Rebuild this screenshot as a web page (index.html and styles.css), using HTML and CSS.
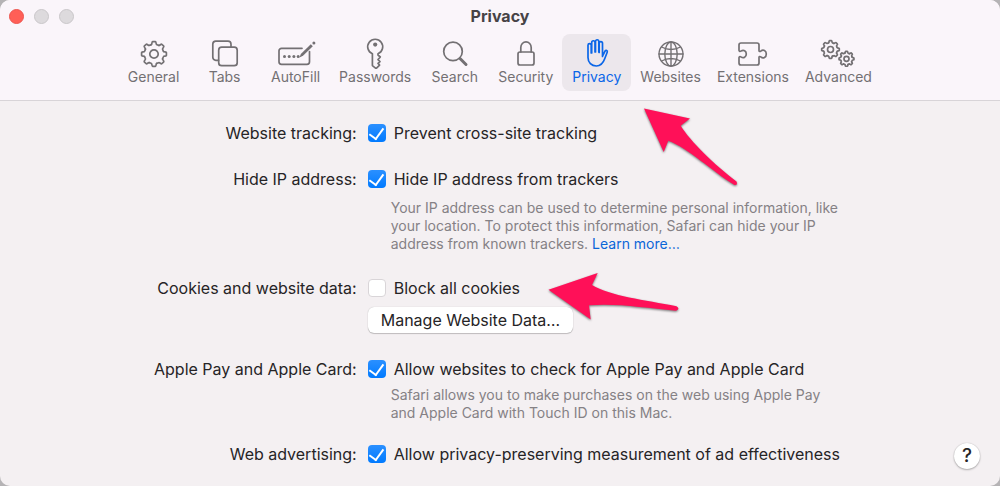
FILE: index.html
```html
<!DOCTYPE html>
<html lang="en">
<head>
<meta charset="utf-8">
<meta name="viewport" content="width=device-width, initial-scale=1">
<title>Privacy</title>
<link rel="stylesheet" href="styles.css">
</head>
<body>
<svg class="defs" aria-hidden="true">
  <defs>
    <path id="tooth" vector-effect="non-scaling-stroke" d="M-2.6-9.5C-1.8-9.9-2.3-12.4-1.4-12.4H1.4C2.3-12.4 1.8-9.9 2.6-9.5Q3.5-8.9 4.9-8.6"/>
    <g id="gear">
      <use href="#tooth"/>
      <use href="#tooth" transform="rotate(45)"/>
      <use href="#tooth" transform="rotate(90)"/>
      <use href="#tooth" transform="rotate(135)"/>
      <use href="#tooth" transform="rotate(180)"/>
      <use href="#tooth" transform="rotate(225)"/>
      <use href="#tooth" transform="rotate(270)"/>
      <use href="#tooth" transform="rotate(315)"/>
      <circle r="4.2" vector-effect="non-scaling-stroke"/>
    </g>
  </defs>
</svg>
<div class="window">
  <header class="header">
    <div class="titlebar">
      <div class="lights">
        <button class="light light-close" aria-label="Close"></button>
        <button class="light" aria-label="Minimize"></button>
        <button class="light" aria-label="Zoom"></button>
      </div>
      <h1 class="title">Privacy</h1>
    </div>
    <nav class="tabs">
      <button class="tab">
        <svg class="icon" viewBox="0 0 36 34"><use href="#gear" x="18" y="17"/></svg>
        <span>General</span>
      </button>
      <button class="tab">
        <svg class="icon" viewBox="0 0 36 34"><path d="M11.500 23.300H8.800a3 3 0 0 1-3-3V7.200a3 3 0 0 1 3-3H21a3 3 0 0 1 3 3V10"/><rect x="11.700" y="10.200" width="18.500" height="18.500" rx="3"/></svg>
        <span>Tabs</span>
      </button>
      <button class="tab">
        <svg class="icon icon-wide" viewBox="0 0 44 34"><path d="M28 11.300H7.500a2.500 2.500 0 0 0-2.500 2.500v11a2.500 2.500 0 0 0 2.500 2.500h25.500a2.500 2.500 0 0 0 2.500-2.500V14.500"/><g class="solid"><circle cx="10.500" cy="19.500" r="1.500"/><circle cx="15.200" cy="19.500" r="1.500"/><circle cx="19.900" cy="19.500" r="1.500"/><circle cx="24.200" cy="19.500" r="1.500"/><path d="M25.500 20.500l1.300-3.600L36.800 7.200l2 2L29 18.800z"/><circle cx="39.900" cy="5.900" r="1.500"/></g></svg>
        <span>AutoFill</span>
      </button>
      <button class="tab">
        <svg class="icon" viewBox="0 0 36 34"><path d="M15.400 16.700A7.500 7.500 0 1 1 21 16.700V18l2.300 2-2.300 2.600 2 2-2 1.800 1.600 1.700-2.800 2.700q-.8.700-1.600 0l-2.800-2.200z"/><circle class="solid" cx="18.200" cy="7.600" r="2.100"/></svg>
        <span>Passwords</span>
      </button>
      <button class="tab">
        <svg class="icon" viewBox="0 0 36 34"><circle cx="16" cy="14.400" r="9.300"/><path class="handle" d="M23 21.500l6 6"/></svg>
        <span>Search</span>
      </button>
      <button class="tab">
        <svg class="icon" viewBox="0 0 36 34"><rect x="10" y="15" width="16" height="13" rx="2"/><path d="M12.800 15v-4.500a5.200 5.700 0 0 1 10.400 0V15"/></svg>
        <span>Security</span>
      </button>
      <button class="tab tab-active" aria-current="page">
        <svg class="icon" viewBox="0 0 36 34"><path d="M9 17.500V8.300a1.600 1.600 0 0 1 3.200 0V16M12.700 16V5.400a1.600 1.600 0 0 1 3.300 0V15M16.500 15V4.400a1.600 1.600 0 0 1 3.300 0V15M20.200 15.500V6.300a1.600 1.600 0 0 1 3.300 0V19.500M9 16.500v4c0 5 3.500 8.500 8.400 8.500 5 0 6.800-3 8.300-7.200l2.500-6.500c.7-1.900-1.300-2.500-2.300-1L23.500 19"/></svg>
        <span>Privacy</span>
      </button>
      <button class="tab">
        <svg class="icon" viewBox="0 0 36 34"><g class="fine"><circle cx="18" cy="17" r="12"/><ellipse cx="18" cy="17" rx="6.200" ry="12"/><path d="M18 5v24M6 17h24M8.500 10q9.500 5 19 0M8.500 24q9.500-5 19 0"/></g></svg>
        <span>Websites</span>
      </button>
      <button class="tab">
        <svg class="icon" viewBox="0 0 36 34"><path d="M4 13.300V8a2 2 0 0 1 2-2H22a2 2 0 0 1 2 2v5.600c0 1 1 1.200 1.800.5 2.500-2.200 5.500-.4 5.500 2.900s-3 5.100-5.500 2.900c-.8-.7-1.800-.5-1.800.5V26a2 2 0 0 1-2 2H6a2 2 0 0 1-2-2V20.700c0-1 .9-1.500 1.900-.8 2.700 1.900 5.400.2 5.400-2.900S8.600 12.200 5.900 14.100C4.900 14.800 4 14.300 4 13.300z"/></svg>
        <span>Extensions</span>
      </button>
      <button class="tab">
        <svg class="icon" viewBox="0 0 36 34"><g transform="translate(10.500 12.500) scale(.71)"><use href="#gear"/></g><g transform="translate(26.500 21.800) scale(.6)"><use href="#gear"/></g></svg>
        <span>Advanced</span>
      </button>
    </nav>
  </header>

  <main class="settings">
    <span class="label" id="tracking">Website tracking:</span>
    <div class="field" role="group" aria-labelledby="tracking">
      <label class="check"><input type="checkbox" checked>Prevent cross-site tracking</label>
    </div>

    <span class="label" id="ip">Hide IP address:</span>
    <div class="field" role="group" aria-labelledby="ip">
      <label class="check"><input type="checkbox" checked>Hide IP address from trackers</label>
      <p class="note">Your IP address can be used to determine personal information, like<br>your location. To protect this information, Safari can hide your IP<br>address from known trackers. <a href="#">Learn more…</a></p>
    </div>

    <span class="label" id="cookies">Cookies and website data:</span>
    <div class="field" role="group" aria-labelledby="cookies">
      <label class="check"><input type="checkbox">Block all cookies</label>
      <button class="push">Manage Website Data…</button>
    </div>

    <span class="label" id="pay">Apple Pay and Apple Card:</span>
    <div class="field" role="group" aria-labelledby="pay">
      <label class="check"><input type="checkbox" checked>Allow websites to check for Apple Pay and Apple Card</label>
      <p class="note note-tight">Safari allows you to make purchases on the web using Apple Pay<br>and Apple Card with Touch ID on this Mac.</p>
    </div>

    <span class="label" id="ads">Web advertising:</span>
    <div class="field" role="group" aria-labelledby="ads">
      <label class="check"><input type="checkbox" checked>Allow privacy-preserving measurement of ad effectiveness</label>
    </div>
  </main>

  <button class="help" aria-label="Help">?</button>

  <svg class="arrow arrow-tab" viewBox="0 0 100 84" aria-hidden="true"><path d="M4 3.500L50 13.500 40.700 20.700C50 36 75 60 96.500 76.500Q98 80.500 94.500 80C72 66 48 43 28.300 35.700L23.700 47z"/></svg>
  <svg class="arrow arrow-cookies" viewBox="0 0 136 54" aria-hidden="true"><path d="M3.500 19.700L52.700 3 47 15C65 26 100 30 131.500 36.200Q135.500 39 131 40.700C100 38 72 33 44 35.300L45.700 49.500z"/></svg>
</div>
</body>
</html>
```

FILE: styles.css
```css
* {
  box-sizing: border-box;
}

body {
  margin: 0;
  background: #b5b3b5;
  color: #262426;
  font: 16px/20px Inter, "Liberation Sans", sans-serif;
}

button {
  margin: 0;
  border: 0;
  padding: 0;
  background: none;
  color: inherit;
  font: inherit;
}

.defs {
  position: absolute;
  width: 0;
  height: 0;
}

.window {
  position: relative;
  min-height: 100vh;
  border-radius: 10px;
  background: #f4f0f2;
  overflow: hidden;
}

.header {
  border-bottom: 1px solid #d8d4d8;
  padding-bottom: 9px;
  background: #faf5fa;
}

.titlebar {
  display: grid;
  grid-template-columns: 1fr auto 1fr;
  align-items: center;
  height: 34px;
  padding: 0 9px 2px;
}

.lights {
  display: flex;
  gap: 10px;
}

.light {
  width: 15px;
  height: 15px;
  border: 1px solid #c9c6c9;
  border-radius: 50%;
  background: #dddadd;
}

.light-close {
  border-color: #ec554f;
  background: #ff5f57;
}

.title {
  margin: 0;
  color: #464346;
  font-size: 16px;
  font-weight: 700;
}

.tabs {
  display: flex;
  justify-content: center;
  gap: 2px;
  padding-right: 2px;
}

.tab {
  display: flex;
  flex-direction: column;
  align-items: center;
  min-width: 69px;
  padding: 3px 7px 8px;
  border-radius: 8px;
  color: #737073;
  font-size: 14px;
  line-height: 12px;
}

.tab-active {
  background: #ece7ec;
  color: #0a66e8;
}

.icon {
  width: 36px;
  height: 34px;
  fill: none;
  stroke: currentColor;
  stroke-width: 1.7;
  stroke-linecap: round;
  stroke-linejoin: round;
}

.icon-wide {
  width: 44px;
}

.solid {
  fill: currentColor;
  stroke: none;
}

.handle {
  stroke-width: 3;
}

.fine {
  stroke-width: 1.4;
}

.settings {
  display: grid;
  grid-template-columns: auto auto;
  justify-content: center;
  gap: 26px 11px;
  padding: 22px 14px 22px 8px;
}

.label {
  text-align: right;
}

.field {
  display: flex;
  flex-direction: column;
  align-items: flex-start;
}

.check {
  display: flex;
  align-items: center;
  gap: 8px;
}

.check input {
  appearance: none;
  display: grid;
  place-items: center;
  width: 18px;
  height: 18px;
  margin: 0;
  border: 1px solid #d9d5d8;
  border-radius: 4px;
  background: #fff;
}

.check input:checked {
  border: 0;
  background: linear-gradient(#2b90ff, #007aff);
}

.check input:checked::after {
  content: "";
  width: 7px;
  height: 12px;
  border: solid #fff;
  border-width: 0 2px 2px 0;
  transform: translateY(-1px) rotate(36deg);
}

.note {
  margin: 10px 0 -1px 23px;
  color: #858185;
  font-size: 14px;
  line-height: 18px;
}

.note-tight {
  margin-top: 7px;
  margin-bottom: -4px;
}

.note a {
  color: #0a66d8;
  text-decoration: none;
}

.push {
  height: 26px;
  margin: 9px 0 0;
  padding: 0 13px;
  border-radius: 6px;
  background: #fff;
  box-shadow: 0 0 1px #0004, 0 1px 1px #0003;
}

.help {
  position: absolute;
  right: 20px;
  bottom: 17px;
  width: 26px;
  height: 26px;
  border-radius: 50%;
  background: #fff;
  box-shadow: 0 0 1px #0004, 0 1px 2px #0004;
  font-size: 19px;
  font-weight: 500;
}

.arrow {
  position: absolute;
  fill: #ff1058;
  filter: drop-shadow(0 1px 1px #0008);
  pointer-events: none;
}

.arrow-tab {
  top: 105px;
  left: 640px;
  width: 100px;
}

.arrow-cookies {
  top: 270px;
  left: 545px;
  width: 136px;
}
```
